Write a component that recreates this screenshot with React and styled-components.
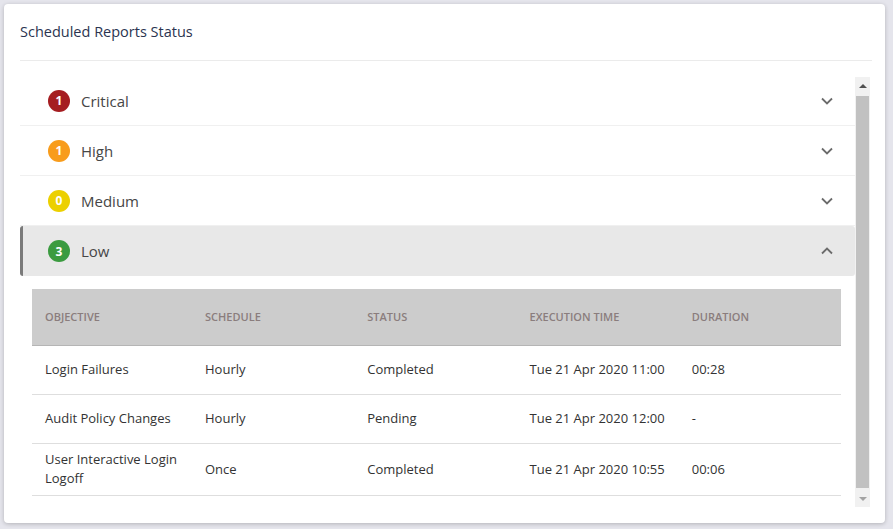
import React from 'react'
import styled, { createGlobalStyle } from 'styled-components'

const GlobalStyle = createGlobalStyle`
  html, body {
    margin: 0;
    padding: 0;
    background: #e5e5ec;
    font-family: 'Open Sans', 'Noto Sans', sans-serif;
  }
`

const levels = [
  { name: 'Critical', count: 1, color: '#a51d21' },
  { name: 'High', count: 1, color: '#f89c1c' },
  { name: 'Medium', count: 0, color: '#ecd000' },
  { name: 'Low', count: 3, color: '#3b9b40', open: true },
]

const columns = ['Objective', 'Schedule', 'Status', 'Execution Time', 'Duration']

const reports = [
  ['Login Failures', 'Hourly', 'Completed', 'Tue 21 Apr 2020 11:00', '00:28'],
  ['Audit Policy Changes', 'Hourly', 'Pending', 'Tue 21 Apr 2020 12:00', '-'],
  ['User Interactive Login Logoff', 'Once', 'Completed', 'Tue 21 Apr 2020 10:55', '00:06'],
]

const Chevron = ({ up }) => (
  <svg width="12" height="8" viewBox="0 0 12 8">
    <polyline
      points={up ? '1,6.5 6,1.5 11,6.5' : '1,1.5 6,6.5 11,1.5'}
      fill="none"
      stroke="#6b6b6b"
      strokeWidth="1.8"
    />
  </svg>
)

const App = () => {
  return (
    <Page>
      <GlobalStyle />
      <Card>
        <Title>Scheduled Reports Status</Title>
        <Body>
          <Content>
            {levels.map(level => (
              <div key={level.name}>
                <Header open={level.open}>
                  <Badge color={level.color}>{level.count}</Badge>
                  <Label>{level.name}</Label>
                  <Chevron up={level.open} />
                </Header>
                {level.open && (
                  <Panel>
                    <Table>
                      <colgroup>
                        <FirstCol />
                        <col />
                        <col />
                        <col />
                        <col />
                      </colgroup>
                      <thead>
                        <tr>
                          {columns.map(c => (
                            <Th key={c}>{c}</Th>
                          ))}
                        </tr>
                      </thead>
                      <tbody>
                        {reports.map(row => (
                          <tr key={row[0]}>
                            {row.map((cell, i) => (
                              <Td key={i}>{cell}</Td>
                            ))}
                          </tr>
                        ))}
                      </tbody>
                    </Table>
                  </Panel>
                )}
              </div>
            ))}
          </Content>
          <Rail>
            <ArrowButton>
              <Arrow up />
            </ArrowButton>
            <Thumb />
            <ArrowButton>
              <Arrow />
            </ArrowButton>
          </Rail>
        </Body>
      </Card>
    </Page>
  )
}

const Page = styled.div`
  padding: 4px 8px 6px 4px;
  height: 529px;
  box-sizing: border-box;
`

const Card = styled.div`
  background: #fff;
  border-radius: 4px;
  box-shadow: 0 1px 4px rgba(0, 0, 0, 0.22);
  padding: 0 13px 16px 16px;
  height: 519px;
  box-sizing: border-box;
  display: flex;
  flex-direction: column;
`

const Title = styled.div`
  height: 56px;
  line-height: 55px;
  font-size: 14.5px;
  font-weight: 500;
  color: #2b3450;
  border-bottom: 1px solid #ebebeb;
  flex: none;
`

const Body = styled.div`
  margin-top: 16px;
  margin-right: 2px;
  flex: 1;
  min-height: 0;
  display: flex;
`

const Content = styled.div`
  flex: 1;
  min-width: 0;
  overflow: hidden;
  margin-top: -1px;
`

const Rail = styled.div`
  width: 15px;
  flex: none;
  background: #f1f1f1;
  display: flex;
  flex-direction: column;
`

const ArrowButton = styled.div`
  height: 17px;
  flex: none;
  display: flex;
  align-items: center;
  justify-content: center;
`

const Arrow = styled.span`
  width: 0;
  height: 0;
  border-left: 4px solid transparent;
  border-right: 4px solid transparent;
  ${p =>
    p.up
      ? 'border-bottom: 4px solid #505050;'
      : 'border-top: 4px solid #a3a3a3;'}
`

const Thumb = styled.div`
  flex: 1;
  margin: 2px 1px;
  background: #c1c1c1;
`

const Header = styled.div`
  display: flex;
  align-items: center;
  padding: 0 22px 0 28px;
  border-bottom: 1px solid #f0f0f0;
  background: ${p => (p.open ? '#e8e8e8' : '#fff')};
  border-left: 3px solid ${p => (p.open ? '#7a7a7a' : 'transparent')};
  border-radius: ${p => (p.open ? '3px' : '0')};
  margin-left: ${p => (p.open ? '0' : '-3px')};
  padding-left: ${p => (p.open ? '25px' : '28px')};
  height: ${p => (p.open ? '50px' : '49px')};
  ${p => p.open && 'border-bottom: 0;'}
`

const Badge = styled.span`
  width: 22px;
  height: 22px;
  border-radius: 50%;
  background: ${p => p.color};
  color: #fff;
  font-size: 12px;
  font-weight: 700;
  display: flex;
  align-items: center;
  justify-content: center;
  flex: none;
`

const Label = styled.span`
  flex: 1;
  margin-left: 11px;
  font-size: 15px;
  color: #464646;
`

const Panel = styled.div`
  padding: 13px 14px 22px 12px;
`

const Table = styled.table`
  width: 100%;
  border-collapse: collapse;
  table-layout: fixed;
`

const FirstCol = styled.col`
  width: 160px;
`

const Th = styled.th`
  background: #cccccc;
  height: 54px;
  padding: 0 13px 2px;
  text-align: left;
  text-transform: uppercase;
  font-size: 11px;
  font-weight: 600;
  color: #8a7d7d;
  border-bottom: 1px solid #b5b5b5;
`

const Td = styled.td`
  height: 49px;
  padding: 6px 13px 7px;
  box-sizing: border-box;
  font-size: 13px;
  line-height: 19px;
  color: #333;
  border-bottom: 1px solid #dedede;
`

export default App
